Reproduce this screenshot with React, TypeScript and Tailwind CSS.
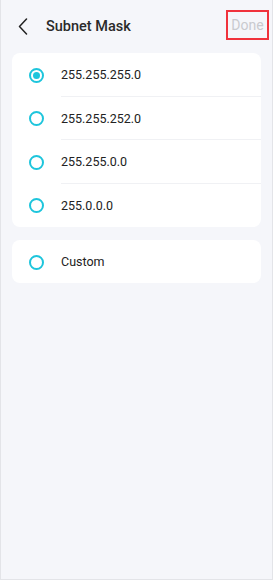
import React, { useState } from 'react';

const options = ['255.255.255.0', '255.255.252.0', '255.255.0.0', '255.0.0.0'];

const Radio: React.FC<{ checked: boolean }> = ({ checked }) => (
  <span className="flex h-[15px] w-[15px] shrink-0 items-center justify-center rounded-full border-2 border-[#1ec5dc]">
    {checked && <span className="h-[7px] w-[7px] rounded-full bg-[#1ec5dc]" />}
  </span>
);

const App: React.FC = () => {
  const [selected, setSelected] = useState('255.255.255.0');

  return (
    <div
      className="flex h-[580px] w-[273px] flex-col border-x border-b border-[#e3e4e8] bg-[#f5f6fa] text-[#222]"
      style={{ fontFamily: 'Roboto, "Noto Sans", sans-serif' }}
    >
      {/* Header */}
      <div className="flex h-[50px] items-center pl-[12px] pr-[3px] pt-[3px]">
        <button className="flex h-[24px] w-[20px] items-center justify-center">
          <svg width="10" height="17" viewBox="0 0 10 17" fill="none">
            <path d="M8.5 1L1.5 8.5L8.5 16" stroke="#222" strokeWidth="1.5" strokeLinecap="round" strokeLinejoin="round" />
          </svg>
        </button>
        <h1 className="ml-[13px] flex-1 text-[14.5px] font-medium text-[#2a2a2a]">Subnet Mask</h1>
        <div className="-mt-[3px] flex h-[30px] w-[43px] items-center justify-center border-2 border-[#f0323c] pt-[1px]">
          <span className="text-[14px] text-[#c9cacf]">Done</span>
        </div>
      </div>

      {/* Options */}
      <div className="mx-[11px] mt-[3px] rounded-[8px] bg-white">
        {options.map((opt, i) => (
          <button
            key={opt}
            onClick={() => setSelected(opt)}
            className="flex h-[43.5px] w-full items-center pl-[17px] pt-[1px] text-left"
          >
            <Radio checked={selected === opt} />
            <span
              className={`ml-[17px] flex h-full flex-1 items-center pt-[2px] text-[12.5px] ${
                i < options.length - 1 ? 'border-b border-[#f0f1f4]' : ''
              }`}
            >
              {opt}
            </span>
          </button>
        ))}
      </div>

      <div className="mx-[11px] mt-[13px] rounded-[8px] bg-white">
        <button
          onClick={() => setSelected('Custom')}
          className="flex h-[43px] w-full items-center pl-[17px] pt-[1px] text-left"
        >
          <Radio checked={selected === 'Custom'} />
          <span className="ml-[17px] pt-[1px] text-[12.5px]">Custom</span>
        </button>
      </div>
    </div>
  );
};

export default App;
